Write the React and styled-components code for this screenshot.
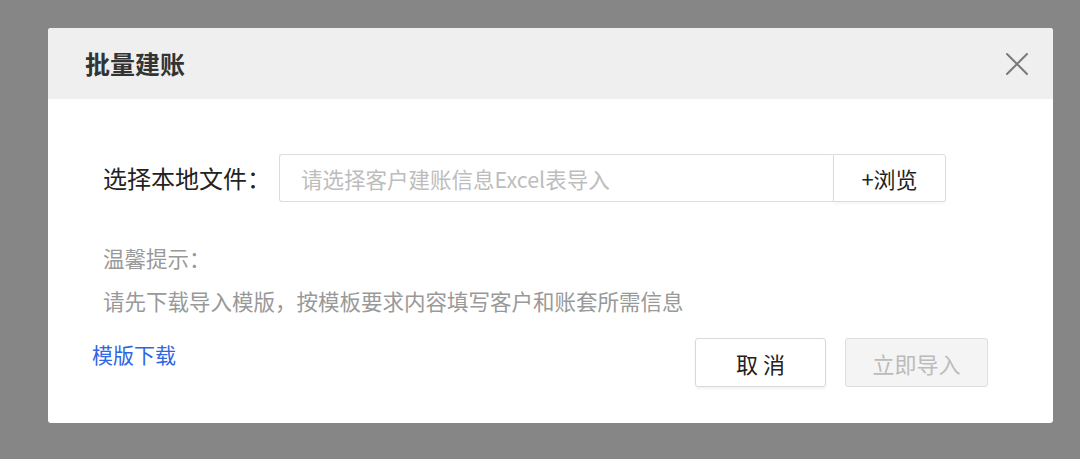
import React from "react";
import styled, { createGlobalStyle } from "styled-components";

const Global = createGlobalStyle`
  html, body {
    margin: 0;
    padding: 0;
    background: #868686;
    font-family: "Noto Sans CJK SC", "Noto Sans", sans-serif;
  }
  * { box-sizing: border-box; }
`;

const Overlay = styled.div`
  width: 1080px;
  height: 459px;
  background: #868686;
  padding: 28px 0 0 48px;
`;

const Dialog = styled.div`
  width: 1005px;
  height: 395px;
  background: #fff;
  border-radius: 3px;
  overflow: hidden;
  display: flex;
  flex-direction: column;
`;

const Header = styled.div`
  height: 71px;
  background: #efefef;
  display: flex;
  align-items: center;
  justify-content: space-between;
  padding: 0 25px 0 37px;
`;

const Title = styled.h2`
  margin: 0;
  font-size: 25px;
  font-weight: 700;
  color: #333;
  line-height: 1;
`;

const CloseButton = styled.button`
  width: 22px;
  height: 22px;
  padding: 0;
  border: none;
  background: transparent;
  display: flex;
  cursor: pointer;
`;

const Body = styled.div`
  padding: 55px 0 0 55px;
`;

const FormRow = styled.div`
  display: flex;
  align-items: center;
  height: 48px;
`;

const Label = styled.label`
  font-size: 24px;
  color: #222;
  margin-right: 8px;
  line-height: 48px;
`;

const InputGroup = styled.div`
  display: flex;
  height: 48px;
`;

const FileInput = styled.input`
  width: 554px;
  height: 48px;
  border: 1px solid #dcdcdc;
  border-right: none;
  border-radius: 3px 0 0 3px;
  padding: 0 0 0 21px;
  font-family: inherit;
  font-size: 21.5px;
  color: #333;
  outline: none;
  &::placeholder {
    color: #bdbdbd;
  }
`;

const BrowseButton = styled.button`
  width: 113px;
  height: 48px;
  border: 1px solid #dcdcdc;
  border-radius: 0 3px 3px 0;
  background: #fff;
  font-family: inherit;
  font-size: 22px;
  color: #222;
  box-shadow: 0 2px 3px rgba(0, 0, 0, 0.04);
  padding: 0;
  cursor: pointer;
`;

const Hints = styled.div`
  margin-top: 34px;
`;

const HintLine = styled.p`
  margin: 0;
  font-size: 21.5px;
  line-height: 43px;
  color: #999;
`;

const Footer = styled.div`
  margin-top: 16px;
  display: flex;
  align-items: flex-start;
  justify-content: space-between;
  padding: 0 65px 0 44px;
`;

const Link = styled.a`
  font-size: 21px;
  line-height: 32px;
  color: #2f66e3;
  text-decoration: none;
  cursor: pointer;
`;

const Actions = styled.div`
  display: flex;
  gap: 19px;
`;

const ActionButton = styled.button`
  height: 49px;
  width: ${(p) => p.$width}px;
  border: 1px solid ${(p) => (p.$disabled ? "#dedede" : "#d9d9d9")};
  border-radius: 3px;
  background: ${(p) => (p.$disabled ? "#f4f4f4" : "#fff")};
  color: ${(p) => (p.$disabled ? "#bbb" : "#222")};
  font-family: inherit;
  font-size: 22px;
  padding: 0;
  box-shadow: ${(p) => (p.$disabled ? "none" : "0 2px 3px rgba(0,0,0,0.05)")};
  cursor: ${(p) => (p.$disabled ? "default" : "pointer")};
`;

export default function App() {
  return (
    <>
      <Global />
      <Overlay>
        <Dialog>
          <Header>
            <Title>批量建账</Title>
            <CloseButton aria-label="关闭">
              <svg width="22" height="22" viewBox="0 0 22 22">
                <path d="M1 1 L21 21 M21 1 L1 21" stroke="#7a7a7a" strokeWidth="2" strokeLinecap="round" fill="none" />
              </svg>
            </CloseButton>
          </Header>
          <Body>
            <FormRow>
              <Label>选择本地文件：</Label>
              <InputGroup>
                <FileInput readOnly placeholder="请选择客户建账信息Excel表导入" />
                <BrowseButton>+浏览</BrowseButton>
              </InputGroup>
            </FormRow>
            <Hints>
              <HintLine>温馨提示：</HintLine>
              <HintLine>请先下载导入模版，按模板要求内容填写客户和账套所需信息</HintLine>
            </Hints>
          </Body>
          <Footer>
            <Link>模版下载</Link>
            <Actions>
              <ActionButton $width={131}>取 消</ActionButton>
              <ActionButton $width={143} $disabled>立即导入</ActionButton>
            </Actions>
          </Footer>
        </Dialog>
      </Overlay>
    </>
  );
}
